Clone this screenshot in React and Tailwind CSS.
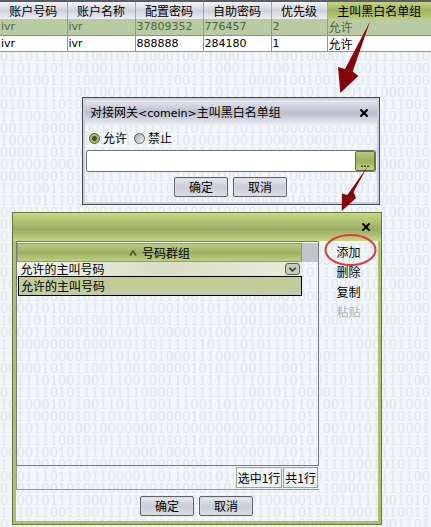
import { ChevronDown, X } from "lucide-react";

const BIT_COUNT = 9000;

function makeBits() {
  let seed = 7919;
  let text = "";
  for (let i = 0; i < BIT_COUNT; i += 1) {
    seed = (seed * 16807) % 2147483647;
    text += seed / 2147483647 > 0.5 ? "1" : "0";
  }
  return text;
}

const bits = makeBits();

const accounts = [
  { id: "ivr", name: "ivr", config: "37809352", self: "776457", level: "2", rule: "允许", selected: true },
  { id: "ivr", name: "ivr", config: "888888", self: "284180", level: "1", rule: "允许", selected: false },
];

const columns = ["账户号码", "账户名称", "配置密码", "自助密码", "优先级"];

function BitBackdrop() {
  return (
    <div
      aria-hidden="true"
      className="absolute inset-x-0 top-[51px] bottom-0 overflow-hidden font-['DejaVu_Serif',serif] text-[13px] leading-3 break-all text-[#e2e7eb] select-none"
    >
      {bits}
    </div>
  );
}

function DialogButton({ children }) {
  return (
    <button
      type="button"
      className="h-5 w-[54px] rounded-[2px] border border-[#62636d] bg-linear-to-b from-[#e9ebf0] via-[#c9ccd5] to-[#dcdfe5] text-center leading-4 shadow-[inset_0_0_0_1px_#d9dbe2]"
    >
      {children}
    </button>
  );
}

function DialogActions() {
  return (
    <div className="flex justify-center gap-[5px]">
      <DialogButton>确定</DialogButton>
      <DialogButton>取消</DialogButton>
    </div>
  );
}

function AccountTable() {
  return (
    <table className="relative w-full table-fixed border-collapse border-t-2 border-[#5b5b66] bg-white">
      <colgroup>
        <col className="w-[67px]" />
        <col className="w-[68px]" />
        <col className="w-[68px]" />
        <col className="w-[68px]" />
        <col className="w-[56px]" />
        <col />
      </colgroup>
      <thead>
        <tr className="h-[18px]">
          {columns.map((column) => (
            <th
              key={column}
              className="border-r border-[#a3a5ad] bg-linear-to-b from-[#f3f4f8] via-[#cfd1db] to-[#eceef3] p-0 leading-4 font-normal"
            >
              {column}
            </th>
          ))}
          <th className="bg-linear-to-b from-[#c3d382] via-[#9fb263] to-[#bccd7c] p-0 leading-4 font-normal">
            主叫黑白名单组
          </th>
        </tr>
      </thead>
      <tbody>
        {accounts.map((account) => (
          <tr
            key={account.config}
            className={
              account.selected
                ? "h-4 border-b border-[#8b9672] bg-[#b9cba3] text-[#53653a]"
                : "h-4 border-b border-[#9a9a72] bg-white"
            }
          >
            {[account.id, account.name, account.config, account.self, account.level].map((value, index) => (
              <td
                key={index}
                className="border-r border-[#9a9a72] p-0 pl-px font-['DejaVu_Sans',sans-serif] text-[11px] leading-[15px]"
              >
                {value}
              </td>
            ))}
            <td className="p-0 pl-px leading-[15px]">{account.rule}</td>
          </tr>
        ))}
      </tbody>
    </table>
  );
}

function RuleDialog() {
  return (
    <section
      role="dialog"
      aria-labelledby="rule-title"
      className="absolute top-[97px] left-[82px] w-[298px] border border-[#484a58] p-[2px] shadow-[inset_0_0_0_2px_#cdd0da]"
    >
      <header className="flex h-[26px] items-center justify-between bg-linear-to-b from-[#e6e8f1] via-[#b9bccb] via-50% to-[#eff2f7] pr-[7px] pl-[5px]">
        <h2 id="rule-title" className="leading-4">
          对接网关<span className="font-['DejaVu_Sans',sans-serif] text-[11px]">&lt;comein&gt;</span>主叫黑白名单组
        </h2>
        <button type="button" aria-label="关闭">
          <X className="size-3" strokeWidth={4} />
        </button>
      </header>
      <fieldset className="flex h-6 items-center gap-[7px] pl-1">
        <label className="flex items-center gap-[3px]">
          <input
            type="radio"
            name="rule"
            defaultChecked
            className="size-[11px] appearance-none rounded-full border border-[#4f5b35] bg-[radial-gradient(circle,#43551f_0_2px,#a8bd6c_3px)]"
          />
          允许
        </label>
        <label className="flex items-center gap-[3px]">
          <input
            type="radio"
            name="rule"
            className="size-[11px] appearance-none rounded-full border border-[#5b5d66] bg-linear-to-br from-[#a4a7b0] to-[#f4f5f8]"
          />
          禁止
        </label>
      </fieldset>
      <div className="mx-px flex h-[22px] rounded-[2px] border border-[#70727c] bg-white">
        <input type="text" aria-label="号码群组" className="min-w-0 flex-1 px-1 outline-none" />
        <button
          type="button"
          className="w-5 rounded-[2px] border border-[#5f6f3b] bg-linear-to-b from-[#b7ca78] via-[#9db062] to-[#bfd282] text-[11px] leading-5"
        >
          ...
        </button>
      </div>
      <div className="py-[5px] pr-px">
        <DialogActions />
      </div>
    </section>
  );
}

function GroupDialog() {
  return (
    <section
      role="dialog"
      aria-label="号码群组"
      className="absolute top-[212px] left-3 w-[370px] border border-[#697a3e] shadow-[inset_0_0_0_3px_#abc06d]"
    >
      <header className="flex h-7 items-center justify-end bg-linear-to-b from-[#c6d985] via-[#9aac63] via-60% to-[#c4d783] pr-[9px]">
        <button type="button" aria-label="关闭">
          <X className="size-3" strokeWidth={4} />
        </button>
      </header>
      <div className="flex px-[3px]">
        <div className="w-[303px]">
          <div className="h-[225px] border border-[#777985] pt-px">
            <div className="flex">
              <table className="min-w-0 flex-1 border-collapse">
                <thead>
                  <tr>
                    <th className="h-[18px] border border-[#8f9c64] bg-linear-to-b from-[#b9ca7b] via-[#9fb066] to-[#bfd182] p-0 font-normal">
                      <button type="button" className="flex w-full items-center justify-center gap-[5px] leading-4">
                        <svg viewBox="0 0 8 6" className="h-[6px] w-2" fill="none" stroke="#52652f" strokeWidth="2">
                          <path d="M1 5.5 L4 1 L7 5.5" />
                        </svg>
                        号码群组
                      </button>
                    </th>
                  </tr>
                </thead>
                <tbody>
                  <tr>
                    <td className="p-0">
                      <div className="relative">
                        <select
                          aria-label="号码群组"
                          className="block h-[14px] w-full appearance-none bg-linear-to-r from-[#f2f4ea] via-[#d9ddc4] to-[#e9ecda] pl-[3px] leading-[14px]"
                        >
                          <option>允许的主叫号码</option>
                        </select>
                        <span className="pointer-events-none absolute top-px right-[2px] flex h-3 w-[15px] items-center justify-center rounded-[3px] border border-[#63653f] bg-[#c6cbc0]">
                          <ChevronDown className="size-[11px] text-[#3f4f22]" strokeWidth={4} />
                        </span>
                      </div>
                    </td>
                  </tr>
                </tbody>
              </table>
              <div className="h-[19px] w-4 bg-[#c3c4c8]" />
            </div>
            <ul role="listbox" aria-label="号码群组" className="mr-4 ml-px">
              <li
                role="option"
                aria-selected="true"
                className="h-5 border border-black bg-linear-to-b from-[#bfcc8f] to-[#c3cba4] pl-[2px] leading-[18px]"
              >
                允许的主叫号码
              </li>
            </ul>
          </div>
          <footer className="flex h-6 items-center justify-end gap-px border-b border-l border-[#9a9c94] pr-px">
            <span className="h-[21px] border border-[#a3a38f] px-px leading-[19px]">选中1行</span>
            <span className="h-[21px] border border-[#a3a38f] px-px leading-[19px]">共1行</span>
          </footer>
        </div>
        <div className="flex flex-1 flex-col items-center pt-px">
          <button type="button" className="h-5">添加</button>
          <button type="button" className="h-5">删除</button>
          <button type="button" className="h-5">复制</button>
          <button type="button" disabled className="h-5 text-[#b3b6ba]">
            粘贴
          </button>
        </div>
      </div>
      <div className="pt-[6px] pr-px pb-2">
        <DialogActions />
      </div>
    </section>
  );
}

function Annotations() {
  return (
    <svg
      aria-hidden="true"
      className="pointer-events-none absolute top-0 left-0 h-[527px] w-[431px]"
      viewBox="0 0 431 527"
    >
      <g fill="#850509">
        <path d="M370 21.5 L352.7 71.5 L358.3 76 L340.3 93 L338 67 L345 69 Z" />
        <path d="M367.5 166.5 L353.5 192 L356 198 L341.7 211 L342 193.5 L347.3 195 Z" />
      </g>
      <ellipse cx="350.5" cy="250" rx="25" ry="15" fill="none" stroke="#e6393b" strokeWidth="2" />
    </svg>
  );
}

export default function App() {
  return (
    <main className="relative min-h-screen overflow-hidden bg-[#f1f6fa] font-['Noto_Sans_CJK_SC',sans-serif] text-xs text-black">
      <BitBackdrop />
      <AccountTable />
      <RuleDialog />
      <GroupDialog />
      <Annotations />
    </main>
  );
}
